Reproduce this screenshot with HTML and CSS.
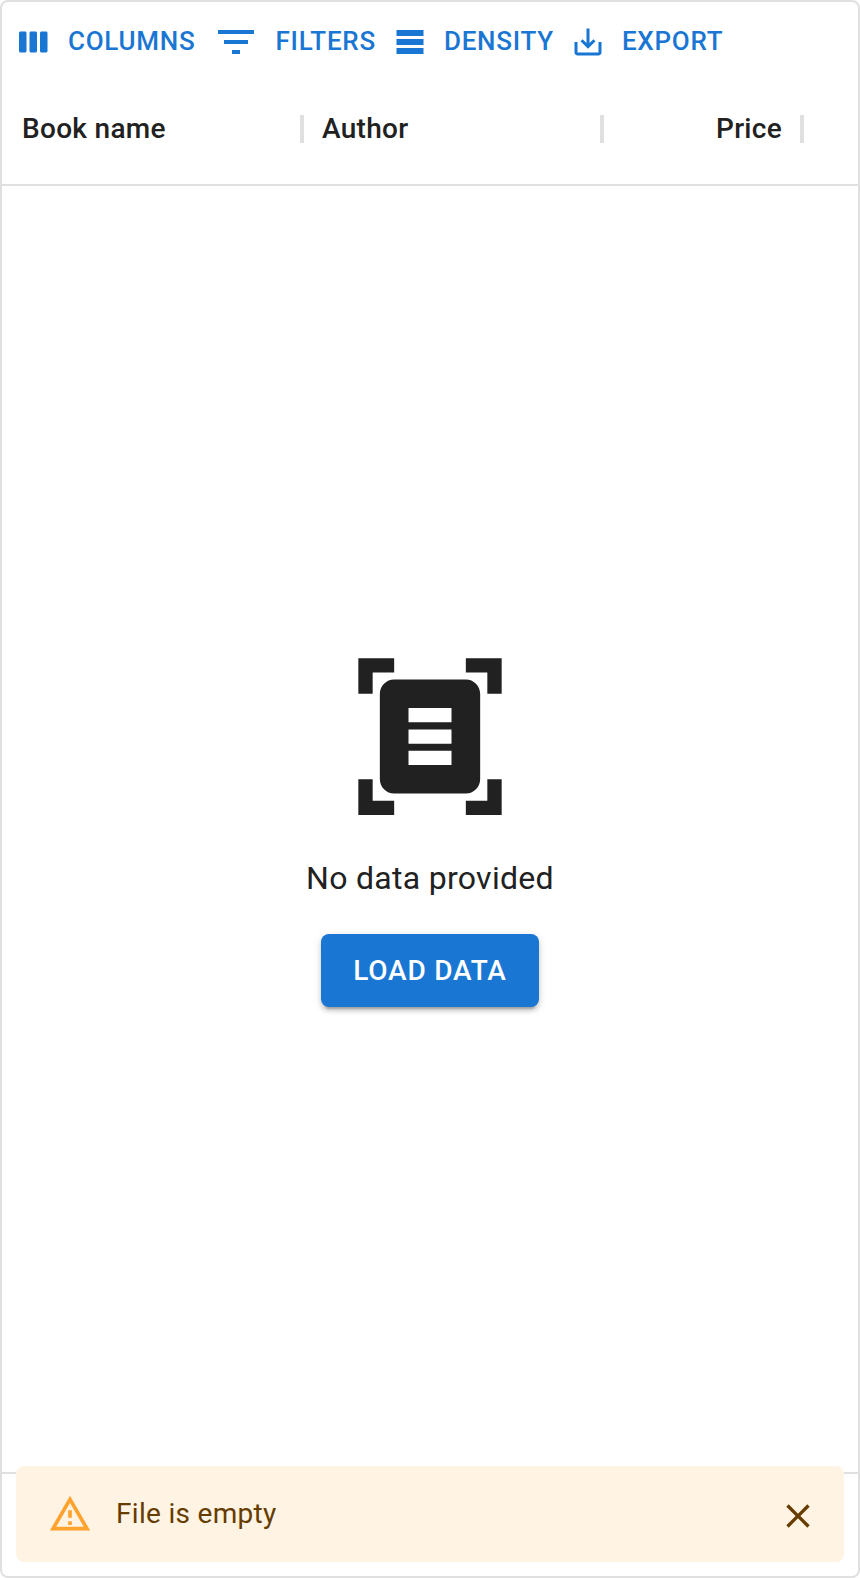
FILE: index.html
```
<!DOCTYPE html>
<html lang="en">
<head>
<meta charset="utf-8">
<title>Books</title>
<link rel="stylesheet" href="styles.css">
</head>
<body>
<div class="grid">
  <div class="toolbar">
    <button class="tool"><svg class="tool-icon" viewBox="0 0 24 24"><path d="M6 5H3c-.55 0-1 .45-1 1v12c0 .55.45 1 1 1h3c.55 0 1-.45 1-1V6c0-.55-.45-1-1-1zm14 0h-3c-.55 0-1 .45-1 1v12c0 .55.45 1 1 1h3c.55 0 1-.45 1-1V6c0-.55-.45-1-1-1zm-7 0h-3c-.55 0-1 .45-1 1v12c0 .55.45 1 1 1h3c.55 0 1-.45 1-1V6c0-.55-.45-1-1-1z"/></svg>Columns</button>
    <button class="tool"><svg class="tool-icon tool-icon-large" viewBox="0 0 24 24"><path d="M10 18h4v-2h-4v2zM3 6v2h18V6H3zm3 7h12v-2H6v2z"/></svg>Filters</button>
    <button class="tool"><svg class="tool-icon" viewBox="0 0 24 24"><path d="M21 8H3V4h18v4zm0 2H3v4h18v-4zm0 6H3v4h18v-4z"/></svg>Density</button>
    <button class="tool"><svg class="tool-icon" viewBox="0 0 24 24"><path d="M19 12v7H5v-7H3v7c0 1.1.9 2 2 2h14c1.1 0 2-.9 2-2v-7h-2zm-6 .67l2.59-2.58L17 11.5l-5 5-5-5 1.41-1.41L11 12.67V3h2z"/></svg>Export</button>
  </div>
  <div class="headers">
    <div class="header">Book name</div>
    <div class="header">Author</div>
    <div class="header header-number">Price</div>
  </div>
  <div class="empty">
    <svg class="empty-icon" viewBox="0 0 24 24" preserveAspectRatio="none"><path d="M7 3H4v3H2V1h5v2zm15 3V1h-5v2h3v3h2zM7 21H4v-3H2v5h5v-2zm13-3v3h-3v2h5v-5h-2zm-1 0c0 1.1-.9 2-2 2H7c-1.1 0-2-.9-2-2V6c0-1.1.9-2 2-2h10c1.1 0 2 .9 2 2v12zM15 8H9v2h6V8zm0 3H9v2h6v-2zm0 3H9v2h6v-2z"/></svg>
    <div class="empty-text">No data provided</div>
    <button class="load">Load data</button>
  </div>
  <div class="footer"></div>
  <div class="alert">
    <svg class="alert-icon" viewBox="0 0 24 24"><path d="M12 5.99L19.53 19H4.47L12 5.99M12 2L1 21h22L12 2zm1 14h-2v2h2v-2zm0-6h-2v4h2v-4z"/></svg>
    <div class="alert-text">File is empty</div>
    <button class="close" aria-label="Close"><svg class="close-icon" viewBox="0 0 24 24"><path d="M19 6.41L17.59 5 12 10.59 6.41 5 5 6.41 10.59 12 5 17.59 6.41 19 12 13.41 17.59 19 19 17.59 13.41 12z"/></svg></button>
  </div>
</div>
</body>
</html>
```
FILE: styles.css
```
* { box-sizing: border-box; }
body {
  margin: 0;
  background: #fff;
  color: #212121;
  font-family: Roboto, "Liberation Sans", sans-serif;
}
button {
  border: 0;
  margin: 0;
  background: none;
  font-family: inherit;
  font-weight: 500;
  line-height: 1.75;
  text-transform: uppercase;
}
svg { display: block; flex: none; fill: currentColor; }
.grid {
  position: relative;
  display: flex;
  flex-direction: column;
  height: 1578px;
  border: 2px solid #e0e0e0;
  border-radius: 8px;
}
.toolbar { display: flex; padding: 8px 8px 0; }
.tool {
  display: flex;
  align-items: center;
  height: 64px;
  padding: 8px 10px;
  color: #1976d2;
  font-size: 26px;
  letter-spacing: 0.02857em;
  white-space: nowrap;
}
.tool-icon { width: 36px; height: 36px; margin: 0 16px 0 -4px; }
.tool-icon-large { width: 48px; height: 48px; }
.headers {
  display: flex;
  height: 112px;
  border-bottom: 2px solid #e0e0e0;
}
.header {
  position: relative;
  display: flex;
  align-items: center;
  width: 300px;
  padding: 0 20px 2px;
  font-size: 28px;
  font-weight: 500;
  letter-spacing: 0.3px;
}
.header::after {
  content: "";
  position: absolute;
  top: 41px;
  right: -2px;
  width: 4px;
  height: 28px;
  background: #e0e0e0;
}
.header-number { width: 200px; justify-content: flex-end; }
.empty {
  flex: 1;
  display: flex;
  flex-direction: column;
  align-items: center;
  justify-content: center;
  gap: 32px;
}
.empty-icon { width: 172px; height: 171px; }
.empty-text { font-size: 32px; line-height: 48px; letter-spacing: 0.3px; }
.load {
  height: 73px;
  padding: 12px 32px;
  border-radius: 8px;
  background: #1976d2;
  color: #fff;
  font-size: 28px;
  letter-spacing: 0.8px;
  box-shadow: 0 6px 2px -4px rgba(0,0,0,.2), 0 4px 4px 0 rgba(0,0,0,.14), 0 2px 10px 0 rgba(0,0,0,.12);
}
.footer { height: 104px; border-top: 2px solid #e0e0e0; }
.alert {
  position: absolute;
  left: 14px;
  right: 14px;
  bottom: 14px;
  display: flex;
  height: 96px;
  padding: 12px 16px 12px 32px;
  border-radius: 8px;
  background: #fff3e4;
  color: #663c00;
}
.alert-icon { width: 44px; height: 44px; margin: 14px 24px 0 0; color: #ffa22e; }
.alert-text { flex: 1; padding: 16px 0; font-size: 28px; line-height: 40px; letter-spacing: 0.3px; }
.close { width: 60px; height: 60px; margin-top: 8px; padding: 10px; color: inherit; }
.close-icon { width: 40px; height: 40px; }
```
